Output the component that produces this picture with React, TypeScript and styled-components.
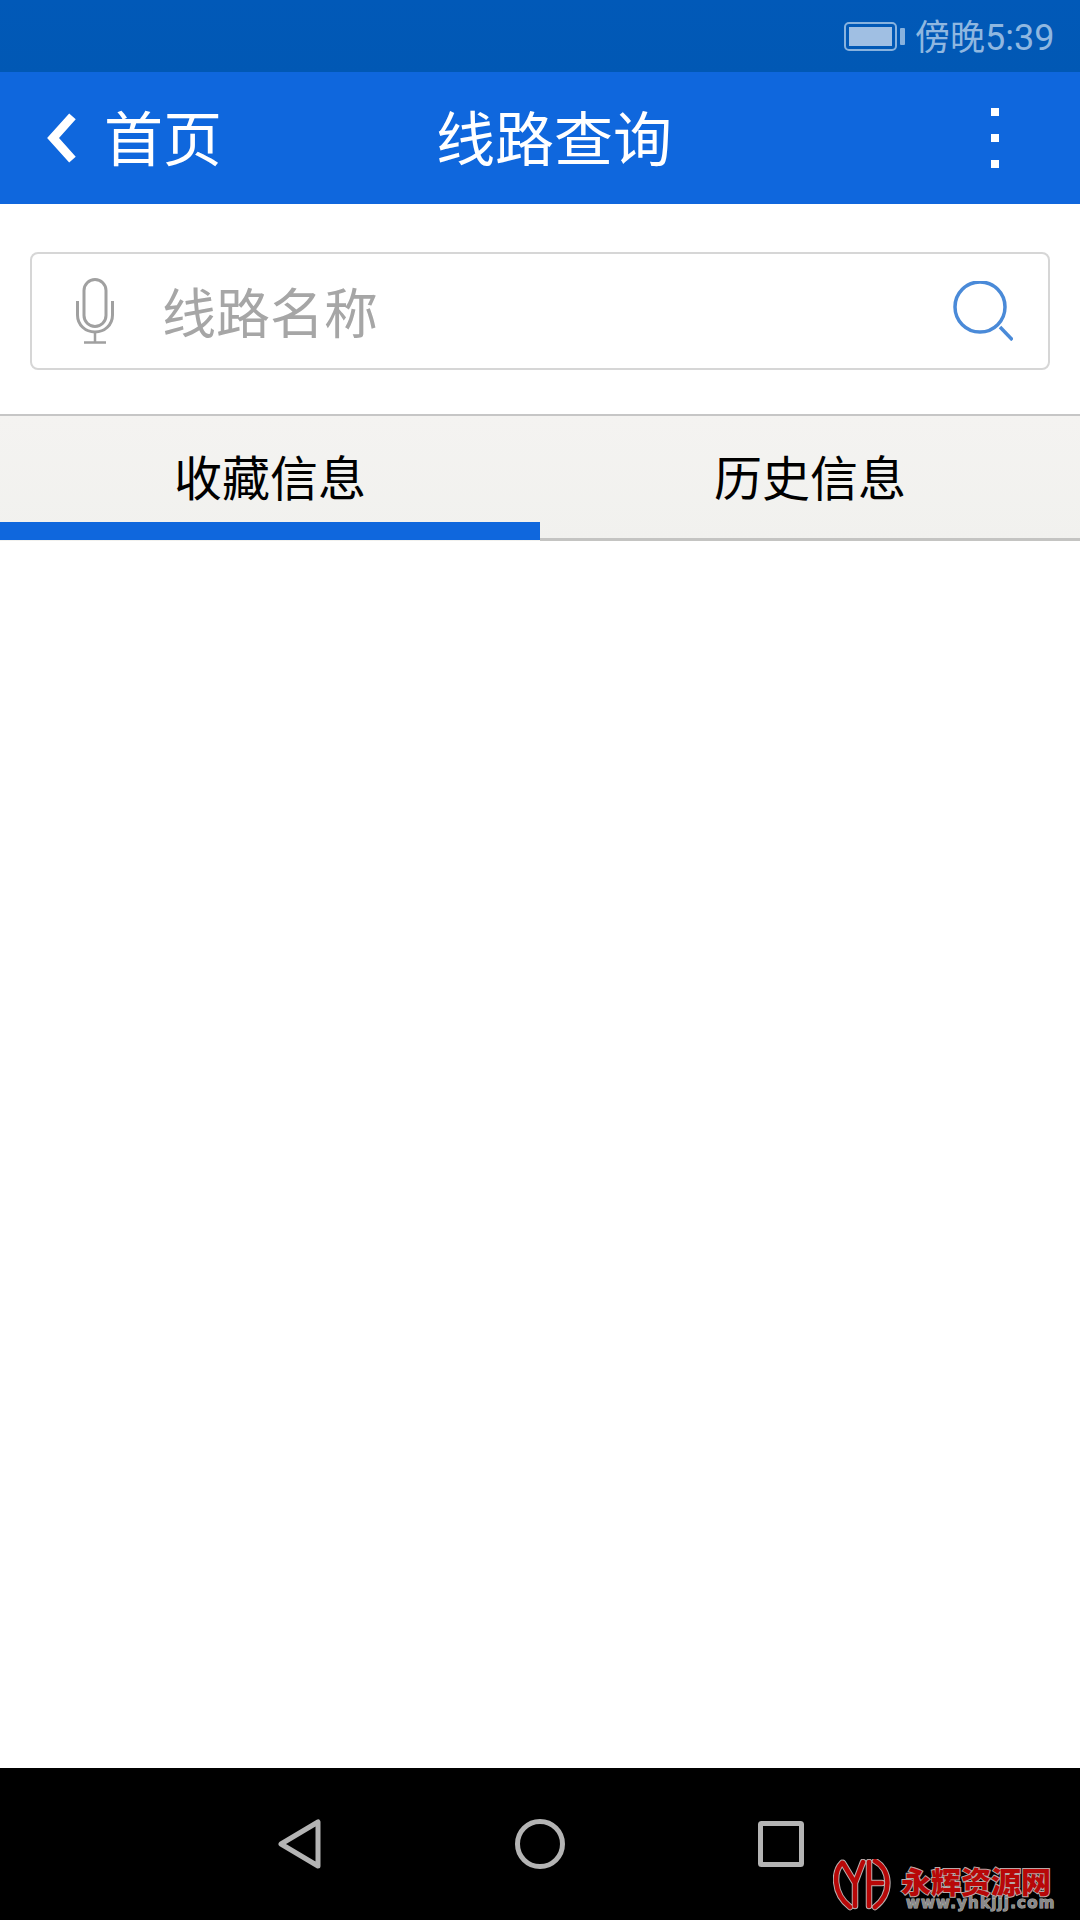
import styled, { createGlobalStyle } from 'styled-components';

const CJK = `'Noto Sans CJK SC', 'Noto Sans', sans-serif`;

const App = () => {
  return (
    <Screen>
      <GlobalStyle />
      <StatusBar>
        <Battery>
          <BatteryLevel />
        </Battery>
        <BatteryNub />
        <StatusTime>
          傍晚<StatusDigits>5:39</StatusDigits>
        </StatusTime>
      </StatusBar>
      <AppBar>
        <BackButton>
          <svg width='34' height='56' viewBox='0 0 34 56'>
            <path d='M30 3.500 8 28l22 24.500' fill='none' stroke='#fff' strokeWidth='10' />
          </svg>
          <BackLabel>首页</BackLabel>
        </BackButton>
        <Title>线路查询</Title>
        <MoreMenu>
          <Dot />
          <Dot />
          <Dot />
        </MoreMenu>
      </AppBar>
      <SearchBox>
        <svg width='38' height='66' viewBox='0 0 38 66' fill='none' stroke='#a0a0a0'>
          <rect x='8' y='1.500' width='22' height='47' rx='11' strokeWidth='3' />
          <path d='M1.500 23v14c0 10 8 17 17.500 17s17.500-7 17.500-17V23' strokeWidth='3' />
          <path d='M19 54v10M8 64.500h22' strokeWidth='2.500' />
        </svg>
        <Placeholder>线路名称</Placeholder>
        <svg width='60' height='60' viewBox='0 0 60 60' fill='none' stroke='#4a8ad8'>
          <circle cx='27' cy='26' r='25' strokeWidth='3.500' />
          <path d='M47 46l12.500 13' strokeWidth='3.500' />
        </svg>
      </SearchBox>
      <Tabs>
        <Tab $active>
          <TabLabel>收藏信息</TabLabel>
        </Tab>
        <Tab>
          <TabLabel>历史信息</TabLabel>
        </Tab>
      </Tabs>
      <Content />
      <NavBar>
        <svg width='44' height='50' viewBox='0 0 44 50' fill='none' stroke='#b4b4b4' strokeWidth='5' strokeLinejoin='round'>
          <path d='M40 3v44L3 25z' />
        </svg>
        <svg width='50' height='50' viewBox='0 0 50 50' fill='none' stroke='#b4b4b4' strokeWidth='5'>
          <circle cx='25' cy='25' r='22.500' />
        </svg>
        <svg width='46' height='46' viewBox='0 0 46 46' fill='none' stroke='#b4b4b4' strokeWidth='5' strokeLinejoin='round'>
          <rect x='2.500' y='2.500' width='41' height='41' rx='1' />
        </svg>
        <Watermark>
          <svg width='58' height='52' viewBox='0 0 58 52' fill='none' strokeLinecap='round' strokeLinejoin='round'>
            <g stroke='#b9b0b0' strokeWidth='6.500'>
              <path d='M9 4C1 12-1 34 17 48M10 4l12 20v23M30 3 22 24M36 3v44M36 24h13M42 2c15 8 18 32 0 46' />
            </g>
            <g stroke='#b80808' strokeWidth='4.500'>
              <path d='M9 4C1 12-1 34 17 48M10 4l12 20v23M30 3 22 24M36 3v44M36 24h13M42 2c15 8 18 32 0 46' />
            </g>
          </svg>
          <WatermarkText>
            <BrandName>永辉资源网</BrandName>
            <BrandUrl>www.yhkjjj.com</BrandUrl>
          </WatermarkText>
        </Watermark>
      </NavBar>
    </Screen>
  );
};

const GlobalStyle = createGlobalStyle`
  html, body {
    margin: 0;
    padding: 0;
    background: #fff;
  }
`;

const Screen = styled.div`
  display: flex;
  flex-direction: column;
  width: 1080px;
  height: 1920px;
  overflow: hidden;
  background: #fff;
  font-family: ${CJK};
`;

const StatusBar = styled.div`
  display: flex;
  align-items: center;
  box-sizing: border-box;
  height: 72px;
  padding-left: 844px;
  background: linear-gradient(#0159b8, #0158b4);
  color: #8fb7e0;
`;

const Battery = styled.div`
  box-sizing: border-box;
  width: 53px;
  height: 29px;
  padding: 3px;
  border: 2px solid #88b2de;
  border-radius: 5px;
`;

const BatteryLevel = styled.div`
  height: 100%;
  background: #a0bfe3;
`;

const BatteryNub = styled.div`
  width: 5px;
  height: 17px;
  margin-left: 3px;
  border-radius: 1px;
  background: #88b2de;
`;

const StatusTime = styled.div`
  margin-left: 10px;
  font-size: 35px;
  line-height: 72px;
  white-space: nowrap;
`;

const StatusDigits = styled.span`
  font-family: Roboto, sans-serif;
  font-size: 36px;
`;

const AppBar = styled.div`
  display: flex;
  align-items: center;
  height: 132px;
  padding: 0 81px 0 46px;
  background: #0f67dd;
  color: #fff;
`;

const BackButton = styled.div`
  display: flex;
  align-items: center;
  gap: 28px;
  width: 176px;
  font-size: 59px;
  line-height: 1;
  white-space: nowrap;
`;

const BackLabel = styled.span`
  margin-top: -5px;
`;

const Title = styled.div`
  margin-top: -5px;
  margin-left: 214px;
  font-size: 59px;
  line-height: 1;
  white-space: nowrap;
`;

const MoreMenu = styled.div`
  display: flex;
  flex-direction: column;
  gap: 18px;
  margin-left: auto;
`;

const Dot = styled.span`
  display: block;
  width: 8px;
  height: 8px;
  background: #fff;
`;

const SearchBox = styled.div`
  display: flex;
  align-items: center;
  box-sizing: border-box;
  height: 118px;
  margin: 48px 30px 44px;
  padding: 0 35px 0 44px;
  border: 2px solid #d6d6d6;
  border-radius: 8px;
`;

const Placeholder = styled.div`
  flex: 1;
  margin-left: 48px;
  color: #a6a6a6;
  font-size: 54px;
  line-height: 1;
`;

const Tabs = styled.div`
  display: flex;
  border-top: 2px solid #c6c6c6;
  box-shadow: 0 3px 3px rgba(0, 0, 0, 0.14);
  background: linear-gradient(#f4f3f1, #f1f1ee);
`;

const Tab = styled.div<{ $active?: boolean }>`
  position: relative;
  display: flex;
  flex: 1;
  align-items: center;
  justify-content: center;
  height: 125px;
  color: #000;
  font-size: 48px;

  &::after {
    content: '';
    position: absolute;
    right: 0;
    bottom: ${(props) => (props.$active ? '1px' : '0')};
    left: 0;
    height: ${(props) => (props.$active ? '18px' : '3px')};
    background: ${(props) => (props.$active ? '#0f67dd' : '#c4c4c2')};
  }
`;

const TabLabel = styled.span`
  margin-top: -8px;
`;

const Content = styled.div`
  flex: 1;
  background: #fff;
`;

const NavBar = styled.div`
  position: relative;
  display: flex;
  align-items: center;
  gap: 193px;
  height: 152px;
  padding-left: 278px;
  background: #000;
`;

const Watermark = styled.div`
  position: absolute;
  top: 91px;
  left: 833px;
  display: flex;
  gap: 10px;
`;

const WatermarkText = styled.div`
  display: flex;
  flex-direction: column;
  margin-top: 5px;
`;

const BrandName = styled.div`
  color: #b80808;
  font-size: 30px;
  font-weight: 900;
  line-height: 32px;
  white-space: nowrap;
  -webkit-text-stroke: 2px #b9a8a8;
  paint-order: stroke fill;
`;

const BrandUrl = styled.div`
  margin-left: 5px;
  color: #8a8a8a;
  font-family: 'DejaVu Sans', sans-serif;
  font-size: 15px;
  font-weight: 700;
  letter-spacing: 1.2px;
  line-height: 14px;
  white-space: nowrap;
  -webkit-text-stroke: 1px #b4b4b4;
  paint-order: stroke fill;
`;

export default App;
